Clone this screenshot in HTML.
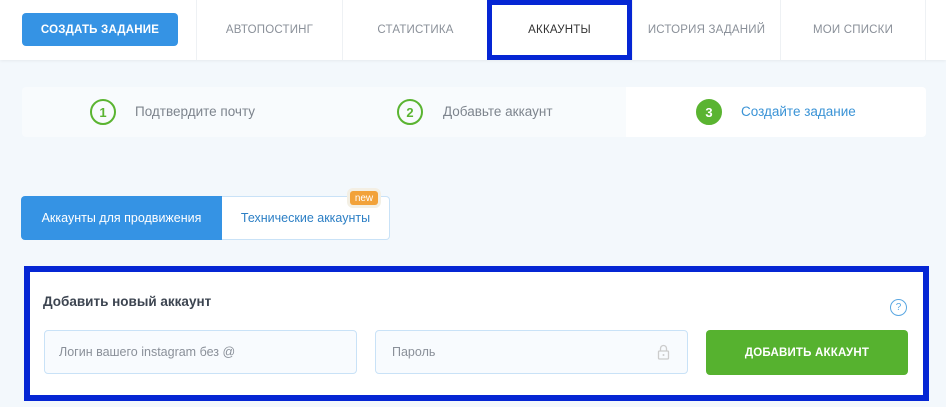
<!DOCTYPE html>
<html><head><meta charset="utf-8"><style>
*{box-sizing:border-box;margin:0;padding:0}
body{width:946px;height:407px;background:#f3f8fc;font-family:"Liberation Sans",sans-serif;position:relative;overflow:hidden}
.a{position:absolute}
.nav{left:0;top:0;width:946px;height:60px;background:#fff;box-shadow:0 1px 3px rgba(0,0,0,.06)}
.tab{top:0;height:60px;font-size:11.5px;color:#8a9099;display:flex;align-items:center;justify-content:center;border-left:1px solid #eef1f4;letter-spacing:.2px}
.c{width:26px;height:26px;border-radius:50%;border:2px solid #5ab431;color:#5ab431;font-size:13px;display:flex;align-items:center;justify-content:center;font-weight:bold}
.st{font-size:13.5px;color:#7d848d}
</style></head><body>
<div class="a nav"></div>
<div class="a" style="left:22px;top:13px;width:156px;height:33px;background:#3593e4;border-radius:4px;color:#fff;font-size:11.5px;font-weight:bold;display:flex;align-items:center;justify-content:center;letter-spacing:.2px">СОЗДАТЬ ЗАДАНИЕ</div>
<div class="a tab" style="left:196px;width:146px">АВТОПОСТИНГ</div>
<div class="a tab" style="left:342px;width:146px">СТАТИСТИКА</div>
<div class="a tab" style="left:487px;width:145px;color:#333;border:5px solid #0526d4">АККАУНТЫ</div>
<div class="a tab" style="left:632px;width:148px">ИСТОРИЯ ЗАДАНИЙ</div>
<div class="a tab" style="left:780px;width:146px;border-right:1px solid #eef1f4">МОИ СПИСКИ</div>

<div class="a" style="left:22px;top:87px;width:904px;height:50px;background:#f8fbfd;border-radius:4px"></div>
<div class="a" style="left:626px;top:87px;width:300px;height:50px;background:#fff;border-radius:0 4px 4px 0"></div>
<div class="a c" style="left:90px;top:99px">1</div><div class="a st" style="left:135px;top:104px">Подтвердите почту</div>
<div class="a c" style="left:397px;top:99px">2</div><div class="a st" style="left:443px;top:104px">Добавьте аккаунт</div>
<div class="a c" style="left:696px;top:99px;background:#5ab431;color:#fff">3</div><div class="a st" style="left:741px;top:104px;color:#3a93d6">Создайте задание</div>

<div class="a" style="left:21px;top:196px;width:201px;height:44px;background:#3593e4;border-radius:4px 0 0 4px;color:#fff;font-size:12.5px;display:flex;align-items:center;justify-content:center">Аккаунты для продвижения</div>
<div class="a" style="left:222px;top:196px;width:168px;height:44px;background:#fff;border:1px solid #c9e2f7;border-left:none;border-radius:0 4px 4px 0;color:#2c7fc5;font-size:12.5px;display:flex;align-items:center;justify-content:center">Технические аккаунты</div>
<div class="a" style="left:350px;top:191px;width:28px;height:14px;background:#f2a23a;border-radius:3px;color:#fff;font-size:10px;display:flex;align-items:center;justify-content:center;box-shadow:0 0 0 3px #f3efe4">new</div>

<div class="a" style="left:24px;top:266px;width:905px;height:135px;background:#fff;border:6px solid #0526d4"></div>
<div class="a" style="left:43px;top:294px;font-size:13.5px;font-weight:bold;color:#3c4450">Добавить новый аккаунт</div>
<div class="a" style="left:890px;top:299px;width:17px;height:17px;border:1.5px solid #5aa7e2;border-radius:50%;color:#5aa7e2;font-size:10px;display:flex;align-items:center;justify-content:center">?</div>
<div class="a" style="left:44px;top:330px;width:313px;height:44px;background:#f8fbfe;border:1px solid #c9e2f7;border-radius:4px;font-size:12.5px;color:#8a9099;padding:14px 0 0 14px">Логин вашего instagram без @</div>
<div class="a" style="left:375px;top:330px;width:313px;height:44px;background:#f8fbfe;border:1px solid #c9e2f7;border-radius:4px;font-size:12.5px;color:#8a9099;padding:14px 0 0 16px">Пароль</div>
<svg class="a" style="left:657px;top:344px" width="13" height="16" viewBox="0 0 13 16"><path d="M3.5 7V4.5a3 3 0 0 1 6 0V7" fill="none" stroke="#ccc" stroke-width="1.3"/><rect x="1.5" y="7" width="10" height="8" rx="1" fill="none" stroke="#ccc" stroke-width="1.3"/><circle cx="6.5" cy="11" r="1" fill="#ccc"/></svg>
<div class="a" style="left:706px;top:330px;width:202px;height:45px;background:#56b22f;border-radius:4px;color:#fff;font-size:11.5px;font-weight:bold;display:flex;align-items:center;justify-content:center;letter-spacing:.2px">ДОБАВИТЬ АККАУНТ</div>
</body></html>
